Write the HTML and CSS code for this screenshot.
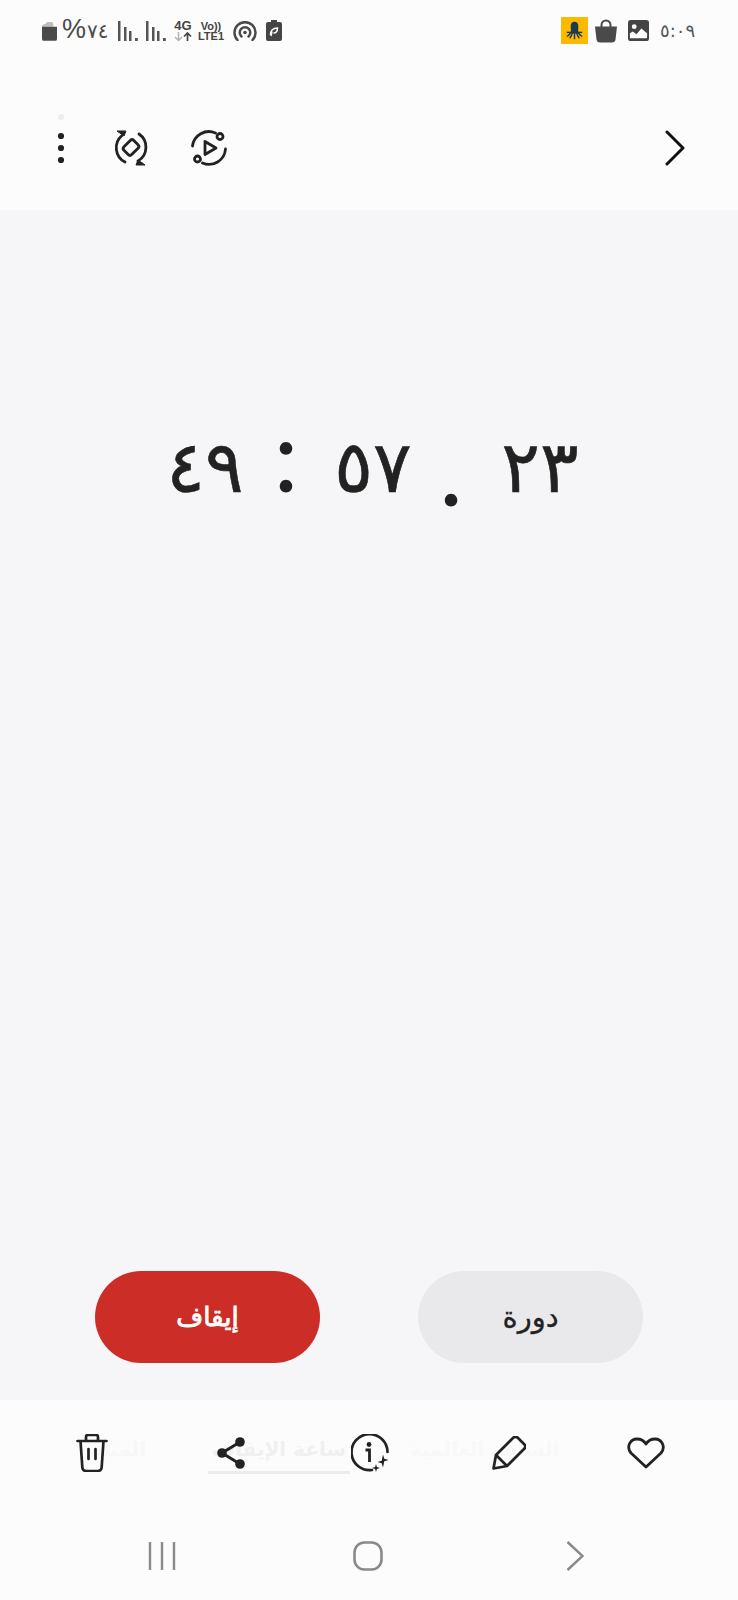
FILE: index.html
```html
<!DOCTYPE html>
<html lang="ar">
<head>
<meta charset="utf-8">
<title>ساعة الإيقاف</title>
<link rel="stylesheet" href="styles.css">
</head>
<body>
<div class="screen">
  <header class="top">
    <div class="status">
      <div class="status-left">
        <svg class="batt" viewBox="0 0 16 21"><path d="M4 3Q4 1 6 1h4q2 0 2 2v3H0V6q0-3 4-3z" fill="#bdbdbd"/><path d="M0 6h16v13q0 2-2 2H2q-2 0-2-2z" fill="#4a4a4a"/></svg>
        <span class="pct"><span class="pct-s">%</span><span class="pct-n">٧٤</span></span>
        <svg class="sig" viewBox="0 0 20 20"><g fill="#555"><rect x="0" y="0" width="2.500" height="20"/><rect x="6" y="6" width="2.500" height="14"/><rect x="11" y="10" width="2.500" height="10"/><rect x="17" y="17" width="2.800" height="3"/></g></svg>
        <svg class="sig sig2" viewBox="0 0 20 20"><g fill="#555"><rect x="0" y="0" width="2.500" height="20"/><rect x="6" y="6" width="2.500" height="14"/><rect x="11" y="10" width="2.500" height="10"/><rect x="17" y="17" width="2.800" height="3"/></g></svg>
        <div class="net">
          <span class="net-t">4G</span>
          <svg class="arrows" viewBox="0 0 18 9"><path d="M4.500 0v8M1 5l3.500 3.500L8 5" fill="none" stroke="#b5b5b5" stroke-width="1.500"/><path d="M13.500 9V1M10 4.500L13.500 1 17 4.500" fill="none" stroke="#444" stroke-width="1.700"/></svg>
        </div>
        <div class="volte"><span>Vo))</span><span>LTE1</span></div>
        <svg class="hot" viewBox="0 0 24 20"><g fill="none" stroke="#4a4a4a" stroke-width="2.500" stroke-linecap="round"><path d="M4.500 19a10.500 10.500 0 1 1 15 0"/><path d="M8.500 15.500a5.300 5.300 0 1 1 7 0"/></g><circle cx="12" cy="11.500" r="1.800" fill="#4a4a4a"/></svg>
        <svg class="saver" viewBox="0 0 16 21"><path d="M5 0h6v2h3q2 0 2 2v15q0 2-2 2H2q-2 0-2-2V4q0-2 2-2h3z" fill="#454545"/><path d="M4.500 15c0-4 2-7 7-7 0 4-2 5-4 5M6 11.500L5 16" fill="none" stroke="#fff" stroke-width="1.500"/></svg>
      </div>
      <div class="status-right">
        <div class="octo">
          <svg viewBox="0 0 28 28"><g fill="none" stroke="#1e3a4f" stroke-width="1.500"><path d="M11 15Q8 20 6 20M12 16q-1 4-3 6M14 16v7M16 16q1 4 3 6M17 15q3 5 5 5"/><path d="M6 16h16"/></g><path d="M10 10q0-5 4-5t4 5l-.5 7h-7z" fill="#1e3a4f"/></svg>
        </div>
        <svg class="bag" viewBox="0 0 22 24"><path d="M6.500 8V6a4.500 4.500 0 0 1 9 0v2" fill="none" stroke="#4a4a4a" stroke-width="2"/><path d="M0 7.500h22l-1.500 13q-.4 3-3.500 3H5q-3 0-3.500-3z" fill="#4a4a4a"/></svg>
        <svg class="pic" viewBox="0 0 22 22"><rect width="22" height="22" rx="3" fill="#444"/><circle cx="6.500" cy="7" r="2.500" fill="#fff"/><path d="M2 19v-5l3-2 4 3 5-6 6 5v4q0 1-1 1H3q-1 0-1-0z" fill="#fff"/></svg>
        <span class="clock">٥:٠٩</span>
      </div>
    </div>
    <nav class="tools">
      <svg class="dots" viewBox="0 0 8 32"><circle cx="4" cy="4" r="3.100"/><circle cx="4" cy="16" r="3.100"/><circle cx="4" cy="28" r="3.100"/></svg>
      <svg class="rot" viewBox="0 0 36 36"><g fill="none" stroke="#222" stroke-width="2.800"><path d="M9 5.500A16 16 0 0 0 12 32" stroke-linecap="round"/><path d="M26 4A16 16 0 0 1 25 31" stroke-linecap="round"/><rect x="11" y="12" width="14" height="11" rx="2.500" transform="rotate(-45 18 17.500)"/></g><path d="M4 1h9l-2 5zM32 35h-9l2-5z" fill="#222" stroke="#222" stroke-linejoin="round"/></svg>
      <svg class="play" viewBox="0 0 36 36"><g fill="none" stroke="#222" stroke-width="2.800" stroke-linecap="round"><path d="M1.500 16A16.500 16.500 0 0 1 24.500 3"/><path d="M34.500 19A16.500 16.500 0 0 1 11.500 33"/><circle cx="29" cy="6.500" r="3"/><circle cx="6.500" cy="29" r="3"/><path d="M14 11.500L25 18 14 24.500z" stroke-linejoin="round"/></g></svg>
      <svg class="next" viewBox="0 0 20 36"><path d="M2 2l16 16L2 34" fill="none" stroke="#111" stroke-width="3" stroke-linecap="round" stroke-linejoin="round"/></svg>
    </nav>
  </header>
  <main class="main">
    <div class="timer">
      <span class="seg">٤٩</span>
      <span class="sep colon">:</span>
      <span class="seg">٥٧</span>
      <span class="sep dot">.</span>
      <span class="seg">٢٣</span>
    </div>
    <div class="actions">
      <button class="btn stop">إيقاف</button>
      <button class="btn lap">دورة</button>
    </div>
  </main>
  <footer class="bottom">
    <div class="bar">
      <div class="ghost">
        <span class="g1">المنبه</span>
        <span class="g2">ساعة الإيقاف</span>
        <span class="g3">الساعة العالمية</span>
      </div>
      <div class="ico"><svg class="i-trash" viewBox="0 0 32 38"><g fill="none" stroke="#222" stroke-width="2.700" stroke-linecap="round" stroke-linejoin="round"><path d="M1.500 7h29M10 7V3q0-2 2-2h8q2 0 2 2v4M4.500 7l1.800 26q.3 4 4 4h11.400q3.700 0 4-4l1.800-26M12.500 15v10M19.500 15v10"/></g></svg></div>
      <div class="ico"><svg class="i-share" viewBox="0 0 28 32"><path d="M23 5L5 16l18 11" fill="none" stroke="#222" stroke-width="3"/><circle cx="23" cy="5" r="4.800" fill="#222"/><circle cx="5" cy="16" r="4.800" fill="#222"/><circle cx="23" cy="27" r="4.800" fill="#222"/></svg></div>
      <div class="ico"><svg class="i-info" viewBox="0 0 38 38"><path d="M21 36A18 18 0 1 1 36.500 18" fill="none" stroke="#222" stroke-width="2.700" stroke-linecap="round"/><circle cx="18" cy="10.500" r="2.400" fill="#222"/><path d="M14.500 16h4v12" fill="none" stroke="#222" stroke-width="2.800"/><path d="M32 20.500l1.300 4.200 4.200 1.300-4.200 1.300L32 33.500l-1.300-4.200-4.200-1.300 4.200-1.300zM25 30l.9 3.100 3.100.9-3.100.9L25 38l-.9-3.100L21 34l3.100-.9z" fill="#222"/></svg></div>
      <div class="ico"><svg class="i-pen" viewBox="0 0 34 34"><g fill="none" stroke="#222" stroke-width="2.700" stroke-linejoin="round"><path d="M1.500 32.500L4 19 21 2q2.500-2.500 5 0l6 6q2.500 2.500 0 5L15 30z"/><path d="M4 19L15 30"/></g></svg></div>
      <div class="ico"><svg class="i-heart" viewBox="0 0 38 32"><path d="M19 30L4 16C-1 10 3 2 10 2q6 0 9 5 3-5 9-5c7 0 11 8 6 14z" fill="none" stroke="#222" stroke-width="2.800" stroke-linejoin="round"/></svg></div>
    </div>
    <div class="sysnav">
      <svg class="n-recent" viewBox="0 0 28 30"><path d="M2 1v28M14 1v28M26 1v28" stroke="#8a8a8a" stroke-width="2.400" fill="none"/></svg>
      <svg class="n-home" viewBox="0 0 30 30"><rect x="1.500" y="1.500" width="27" height="27" rx="10" fill="none" stroke="#8a8a8a" stroke-width="2.600"/></svg>
      <svg class="n-back" viewBox="0 0 18 30"><path d="M1.500 1l15 14-15 14" fill="none" stroke="#8a8a8a" stroke-width="2.400"/></svg>
    </div>
  </footer>
</div>
</body>
</html>
```

FILE: styles.css
```css
* { box-sizing: border-box; }
html, body { margin: 0; padding: 0; }
body { width: 738px; height: 1600px; overflow: hidden; font-family: "DejaVu Sans", "Noto Sans", sans-serif; direction: ltr; }
svg { display: block; flex: none; }
.screen { width: 738px; height: 1600px; display: flex; flex-direction: column; background: #fcfcfd; }

.top { height: 210px; padding-top: 17px; flex: none; }
.status { display: flex; justify-content: space-between; height: 27px; padding: 0 43px 0 42px; }
.status-left, .status-right { display: flex; align-items: center; }
.batt { width: 15px; height: 20px; }
.pct { display: flex; align-items: baseline; margin-left: 5px; color: #4a4a4a; line-height: 27px; width: 51px; }
.pct-s { font-size: 27px; font-family: "Liberation Sans", sans-serif; }
.pct-n { font-size: 20px; margin-left: 1px; }
.sig { width: 20px; height: 20px; margin-left: 5px; }
.sig2 { margin-left: 8px; }
.net { display: flex; flex-direction: column; align-items: center; margin-left: 8px; width: 18px; }
.net-t { font: 700 13px/11px "Liberation Sans", sans-serif; color: #444; }
.arrows { width: 18px; height: 9px; margin-top: 1px; }
.volte { display: flex; flex-direction: column; align-items: center; margin-left: 6px; width: 26px; font: 700 11px/10px "Liberation Sans", sans-serif; color: #444; }
.hot { width: 24px; height: 20px; margin-left: 9px; }
.saver { width: 16px; height: 21px; margin-left: 9px; }
.octo { width: 27px; height: 27px; background: #fdb900; }
.octo svg { width: 27px; height: 27px; }
.bag { width: 22px; height: 24px; margin-left: 7px; }
.pic { width: 21px; height: 21px; margin-left: 11px; }
.clock { margin-left: 11px; font-size: 18px; color: #555; line-height: 27px; width: 35px; text-align: center; }

.tools { display: flex; align-items: center; height: 36px; margin-top: 86px; padding: 0 53px 0 57px; position: relative; }
.tools::before { content: ""; position: absolute; left: 58px; top: -16px; width: 6px; height: 6px; border-radius: 50%; background: #eeeeef; }
.dots { width: 8px; height: 32px; fill: #222; }
.rot { width: 36px; height: 36px; margin-left: 48px; }
.play { width: 36px; height: 36px; margin-left: 42px; }
.next { width: 20px; height: 36px; margin-left: auto; }

.main { height: 1190px; flex: none; background: #f6f6f8; display: flex; flex-direction: column; }
.timer { display: flex; align-items: baseline; height: 90px; margin-top: 198px; padding-left: 159px; color: #222; font-size: 72px; line-height: 90px; }
.seg { width: 92px; text-align: center; -webkit-text-stroke: 0.6px #222; }
.sep { text-align: center; font-family: "Lato", sans-serif; font-size: 100px; }
.colon { width: 76px; padding-right: 6px; }
.dot { width: 75px; padding-right: 11px; align-self: flex-start; margin-top: 14px; }
.actions { display: flex; justify-content: space-between; margin-top: 773px; padding: 0 95px; }
.btn { width: 225px; height: 92px; border: 0; border-radius: 46px; font-family: "DejaVu Sans", sans-serif; padding: 0; }
.stop { background: #cc2e27; color: #fff; font-size: 26px; -webkit-text-stroke: 0.8px #fff; }
.lap { background: #e9e9eb; color: #222; font-size: 29px; -webkit-text-stroke: 0.3px #222; }

.bottom { flex: 1; display: flex; flex-direction: column; position: relative; }
.bar { display: grid; grid-template-columns: repeat(5, 139px); padding: 0 22px; height: 38px; margin-top: 34px; position: relative; }
.ico { display: flex; justify-content: center; align-items: center; position: relative; }
.i-trash { width: 32px; height: 38px; }
.i-share { width: 28px; height: 32px; }
.i-info { width: 38px; height: 38px; }
.i-pen { width: 34px; height: 34px; }
.i-heart { width: 38px; height: 32px; margin-right: 3px; }
.ghost { position: absolute; inset: 0; font-size: 20px; font-weight: 700; }
.ghost span { position: absolute; top: 3px; white-space: nowrap; }
.g1 { left: 90px; color: #f7f7f8; }
.g2 { left: 208px; width: 142px; padding-bottom: 10px; border-bottom: 3px solid #ececee; text-align: center; color: #f0f0f1; }
.g3 { left: 410px; color: #f8f8f9; }

.sysnav { display: flex; align-items: center; height: 30px; margin-top: 69px; padding-left: 148px; }
.n-recent { width: 28px; height: 30px; }
.n-home { width: 30px; height: 30px; margin-left: 177px; }
.n-back { width: 18px; height: 30px; margin-left: 183px; }
```
